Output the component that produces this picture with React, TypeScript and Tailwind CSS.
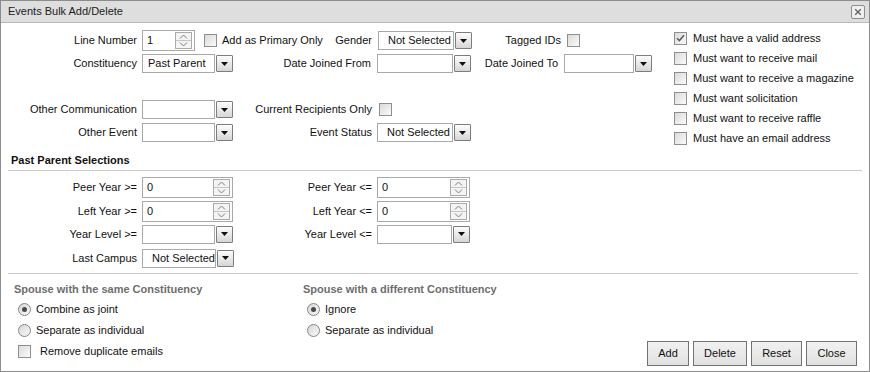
import React from 'react';

function Check({ checked = false }: { checked?: boolean }) {
  return (
    <span className="flex h-[13px] w-[13px] flex-none items-center justify-center border border-[#8f8f8f] bg-linear-to-br from-[#dadada] to-[#fbfbfb]">
      {checked && (
        <svg width="9" height="8" viewBox="0 0 9 8">
          <path d="M1 4.2l2.4 2.4L8 1.2" fill="none" stroke="#5c5c5c" strokeWidth="1.5" />
        </svg>
      )}
    </span>
  );
}

function Radio({ checked = false }: { checked?: boolean }) {
  return (
    <span className="flex h-[13px] w-[13px] flex-none items-center justify-center rounded-full border border-[#858585] bg-linear-to-br from-[#d6d6d6] to-[#fafafa]">
      {checked && <span className="h-[5px] w-[5px] rounded-full bg-[#4a4a4a]" />}
    </span>
  );
}

function Select({ value = '', width, pad = 'pl-[5px]' }: { value?: string; width: string; pad?: string }) {
  return (
    <div className={`flex h-[20px] flex-none items-center ${width}`}>
      <div className={`flex h-[19px] flex-1 items-center border border-[#a9a9a9] bg-white whitespace-nowrap ${pad}`}>
        {value}
      </div>
      <span className="ml-px flex h-[17px] w-[17px] flex-none items-center justify-center rounded-[1px] border border-[#7d7d7d] bg-linear-to-b from-[#fdfdfd] to-[#d6d6d6]">
        <svg width="7" height="4" viewBox="0 0 7 4">
          <path d="M0 0h7L3.5 4z" fill="#111" />
        </svg>
      </span>
    </div>
  );
}

function Spinner({ value, width }: { value: string; width: string }) {
  return (
    <div className={`flex h-[21px] flex-none items-center border border-[#a9a9a9] bg-white pl-[4px] pr-[2px] ${width}`}>
      <span className="flex-1">{value}</span>
      <span className="flex h-[17px] w-[17px] flex-col border border-[#ababab] bg-[#f4f4f4]">
        <span className="flex flex-1 items-center justify-center">
          <svg width="9" height="5" viewBox="0 0 9 5">
            <path d="M1 4.5L4.5 1 8 4.5" fill="none" stroke="#7a7a7a" strokeWidth="1" />
          </svg>
        </span>
        <span className="flex flex-1 items-center justify-center border-t border-[#c4c4c4]">
          <svg width="9" height="5" viewBox="0 0 9 5">
            <path d="M1 0.5L4.5 4 8 0.5" fill="none" stroke="#7a7a7a" strokeWidth="1" />
          </svg>
        </span>
      </span>
    </div>
  );
}

function Label({ text, width }: { text: string; width: string }) {
  return <span className={`flex-none text-right whitespace-nowrap ${width}`}>{text}</span>;
}

const options = [
  { text: 'Must have a valid address', checked: true },
  { text: 'Must want to receive mail' },
  { text: 'Must want to receive a magazine' },
  { text: 'Must want solicitation' },
  { text: 'Must want to receive raffle' },
  { text: 'Must have an email address' },
];

export default function App() {
  return (
    <div className="h-[372px] w-[870px] overflow-hidden border border-[#8c8c8c] bg-white font-['Liberation_Sans',Arial,sans-serif] text-[11px] text-[#111]">
      {/* title bar */}
      <div className="flex h-[22px] items-center justify-between border-b border-[#b9b9b9] bg-[#dedede] pl-[7px] pr-[4px]">
        <span className="text-[11px] text-[#222]">Events Bulk Add/Delete</span>
        <button className="flex h-[14px] w-[14px] items-center justify-center rounded-[2px] border border-[#8d8d8d] bg-[#efefef]">
          <svg width="8" height="8" viewBox="0 0 8 8">
            <path d="M1.2 1.2l5.6 5.6M6.8 1.2L1.2 6.8" stroke="#666" strokeWidth="1.4" />
          </svg>
        </button>
      </div>

      {/* main filters */}
      <div className="flex h-[125px]">
        <div className="w-[673px] flex-none pt-[6px]">
          <div className="flex h-[23px] items-center">
            <div className="flex w-[371px] flex-none items-center">
              <Label text="Line Number" width="w-[136px]" />
              <div className="ml-[5px]">
                <Spinner value="1" width="w-[53px]" />
              </div>
              <span className="ml-[9px]">
                <Check />
              </span>
              <span className="ml-[5px] whitespace-nowrap">Add as Primary Only</span>
              <span className="ml-auto">Gender</span>
            </div>
            <div className="ml-[6px]">
              <Select value="Not Selected" width="w-[94px]" pad="pl-[9px]" />
            </div>
            <Label text="Tagged IDs" width="w-[89px]" />
            <span className="ml-[6px]">
              <Check />
            </span>
          </div>

          <div className="flex h-[23px] items-center">
            <Label text="Constituency" width="w-[136px]" />
            <div className="ml-[5px]">
              <Select value="Past Parent" width="w-[91px]" />
            </div>
            <Label text="Date Joined From" width="w-[138px]" />
            <div className="ml-[6px]">
              <Select width="w-[94px]" />
            </div>
            <Label text="Date Joined To" width="w-[87px]" />
            <div className="ml-[6px]">
              <Select width="w-[88px]" />
            </div>
          </div>

          <div className="h-[23px]" />

          <div className="flex h-[23px] items-center">
            <Label text="Other Communication" width="w-[136px]" />
            <div className="ml-[5px]">
              <Select width="w-[91px]" />
            </div>
            <Label text="Current Recipients Only" width="w-[139px]" />
            <span className="ml-[7px]">
              <Check />
            </span>
          </div>

          <div className="flex h-[23px] items-center">
            <Label text="Other Event" width="w-[136px]" />
            <div className="ml-[5px]">
              <Select width="w-[91px]" />
            </div>
            <Label text="Event Status" width="w-[139px]" />
            <div className="ml-[5px]">
              <Select value="Not Selected" width="w-[94px]" pad="pl-[9px]" />
            </div>
          </div>
        </div>

        <div className="flex flex-col pt-[5px]">
          {options.map((o) => (
            <div key={o.text} className="flex h-[20px] items-center">
              <Check checked={o.checked} />
              <span className="ml-[6px] whitespace-nowrap">{o.text}</span>
            </div>
          ))}
        </div>
      </div>

      {/* past parent */}
      <div className="mt-[4px] h-[16px] pl-[10px] font-bold leading-[16px]">Past Parent Selections</div>
      <div className="mx-[7px] mt-[2px] h-px bg-[#c9c9c9]" />

      <div className="mt-[5px] flex h-[22px] items-center">
        <Label text="Peer Year >=" width="w-[136px]" />
        <div className="ml-[5px]">
          <Spinner value="0" width="w-[91px]" />
        </div>
        <Label text="Peer Year <=" width="w-[139px]" />
        <div className="ml-[5px]">
          <Spinner value="0" width="w-[93px]" />
        </div>
      </div>
      <div className="mt-[2px] flex h-[22px] items-center">
        <Label text="Left Year >=" width="w-[136px]" />
        <div className="ml-[5px]">
          <Spinner value="0" width="w-[91px]" />
        </div>
        <Label text="Left Year <=" width="w-[139px]" />
        <div className="ml-[5px]">
          <Spinner value="0" width="w-[93px]" />
        </div>
      </div>
      <div className="mt-px flex h-[22px] items-center">
        <Label text="Year Level >=" width="w-[136px]" />
        <div className="ml-[5px]">
          <Select width="w-[91px]" />
        </div>
        <Label text="Year Level <=" width="w-[139px]" />
        <div className="ml-[5px]">
          <Select width="w-[93px]" />
        </div>
      </div>
      <div className="mt-[2px] flex h-[22px] items-center">
        <Label text="Last Campus" width="w-[136px]" />
        <div className="ml-[5px]">
          <Select value="Not Selected" width="w-[91px]" pad="pl-[9px]" />
        </div>
      </div>

      <div className="mx-[7px] mt-[4px] h-px w-[850px] bg-[#c9c9c9]" />

      {/* spouse options + actions */}
      <div className="flex h-[96px]">
        <div className="w-[302px] flex-none pl-[13px]">
          <div className="mt-[7px] h-[16px] font-bold leading-[16px] text-[#6e6e6e]">
            Spouse with the same Constituency
          </div>
          <div className="mt-[2px] flex h-[21px] items-center pl-[4px]">
            <Radio checked />
            <span className="ml-[5px]">Combine as joint</span>
          </div>
          <div className="flex h-[21px] items-center pl-[4px]">
            <Radio />
            <span className="ml-[5px]">Separate as individual</span>
          </div>
          <div className="flex h-[21px] items-center pl-[4px]">
            <Check />
            <span className="ml-[9px]">Remove duplicate emails</span>
          </div>
        </div>

        <div className="flex-1">
          <div className="mt-[7px] h-[16px] font-bold leading-[16px] text-[#6e6e6e]">
            Spouse with a different Constituency
          </div>
          <div className="mt-[2px] flex h-[21px] items-center pl-[4px]">
            <Radio checked />
            <span className="ml-[5px]">Ignore</span>
          </div>
          <div className="flex h-[21px] items-center pl-[4px]">
            <Radio />
            <span className="ml-[5px]">Separate as individual</span>
          </div>
        </div>

        <div className="flex items-end gap-[4px] pb-[4px] pr-[12px]">
          {[
            { t: 'Add', w: 'w-[42px]' },
            { t: 'Delete', w: 'w-[54px]' },
            { t: 'Reset', w: 'w-[51px]' },
            { t: 'Close', w: 'w-[51px]' },
          ].map((b) => (
            <button
              key={b.t}
              className={`h-[25px] border border-[#737373] bg-linear-to-b from-[#f1f1f1] to-[#e1e1e1] text-[11px] text-[#111] ${b.w}`}
            >
              {b.t}
            </button>
          ))}
        </div>
      </div>
    </div>
  );
}
